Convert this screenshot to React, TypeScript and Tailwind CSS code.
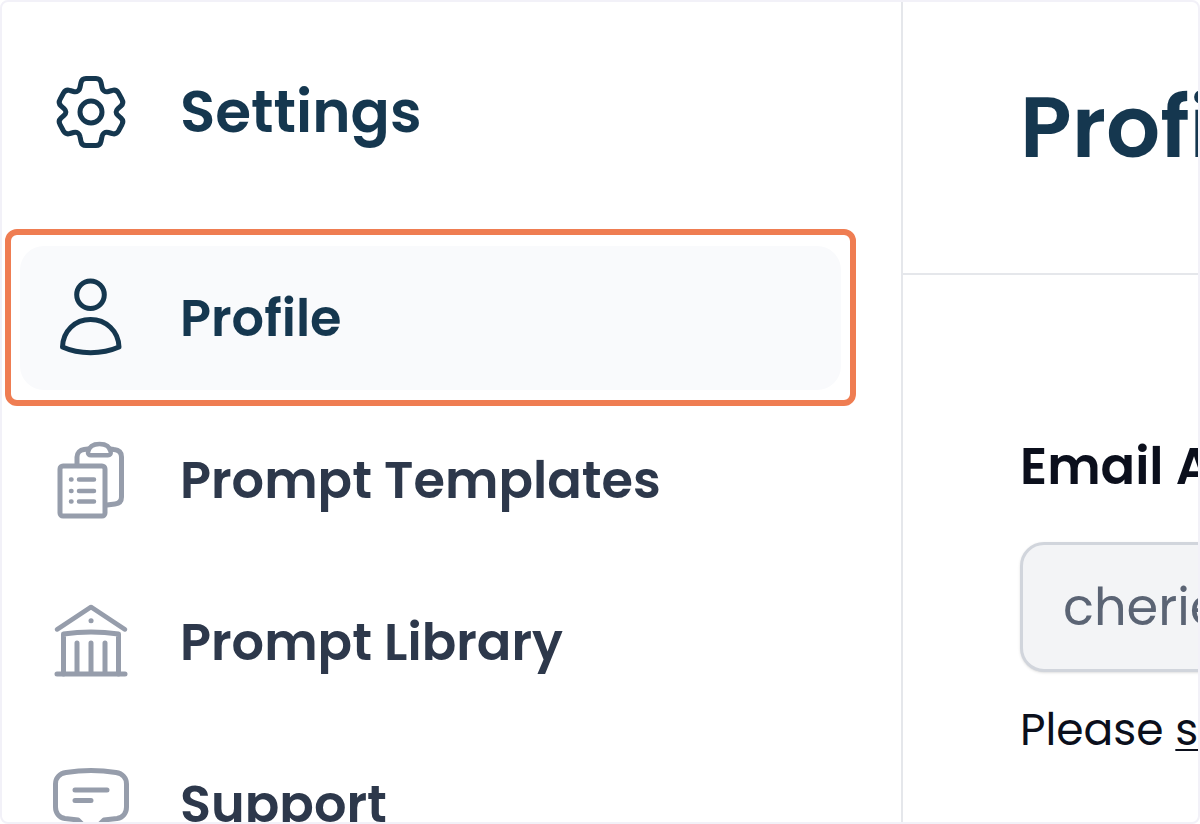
import type { ReactNode } from "react"

function GearIcon() {
  return (
    <svg viewBox="0 0 80 80" className="size-20 shrink-0" fill="none" stroke="currentColor" strokeWidth="5" aria-hidden="true">
      <path d="M35 6.5H45C48 6.5 49.5 8 50 10.5L51 15.5C51.5 18.5 54 20.5 57.5 19.5L61 18.5C64 17.5 66 18.5 67.5 21L71 27.5C72.5 30 72 32 70 34L67 36.5C64.5 39 64.5 41 67 43.5L70 46C72 48 72.5 50 71 52.5L67.5 59C66 61.5 64 62.5 61 61.5L57.5 60.5C54 59.5 51.5 61.5 51 64.5L50 69.5C49.5 72 48 73.5 45 73.5H35C32 73.5 30.5 72 30 69.5L29 64.5C28.5 61.5 26 59.5 22.5 60.5L19 61.5C16 62.5 14 61.5 12.5 59L9 52.5C7.5 50 8 48 10 46L13 43.5C15.5 41 15.5 39 13 36.5L10 34C8 32 7.5 30 9 27.5L12.5 21C14 18.5 16 17.5 19 18.5L22.5 19.5C26 20.5 28.5 18.5 29 15.5L30 10.5C30.5 8 32 6.5 35 6.5Z" />
      <circle cx="40" cy="40" r="11" />
    </svg>
  )
}

function UserIcon() {
  return (
    <svg viewBox="0 0 80 80" className="size-20 shrink-0" fill="none" stroke="currentColor" strokeWidth="5" strokeLinejoin="round" aria-hidden="true">
      <circle cx="39.5" cy="16.7" r="13.8" />
      <path d="M11.5 69C12 53 24 41.5 39.5 41.5S67.5 53 68 69C51 76.5 28 76.5 11.5 69Z" />
    </svg>
  )
}

function ClipboardIcon() {
  return (
    <svg viewBox="0 0 80 80" className="size-20 shrink-0" fill="none" stroke="currentColor" strokeWidth="5" strokeLinecap="round" strokeLinejoin="round" aria-hidden="true">
      <rect x="9" y="26" width="45" height="50" rx="3" />
      <path d="M26 24V17C26 13 29 10 33 9.5L37 9" />
      <path d="M59 9L63 9.5C68 10 70.5 13 70.5 17V57C70.5 61 68 63.5 64 64L56 65" />
      <path d="M40 15.3H57C59 15.3 60 14 59.7 12C59 7 55 4 48.5 4S38 7 37 12C36.7 14 38 15.3 40 15.3Z" strokeWidth="4.5" />
      <path d="M20 39.5H20.5M20 51H20.5M20 61.5H20.5M28 39.5H43M28 51H43M28 61.5H43" strokeWidth="4.5" />
    </svg>
  )
}

function LibraryIcon() {
  return (
    <svg viewBox="0 0 80 80" className="size-20 shrink-0" fill="none" stroke="currentColor" strokeWidth="5" strokeLinecap="round" strokeLinejoin="round" aria-hidden="true">
      <path d="M6 27.5L40 5L74 27.5" strokeWidth="4.5" />
      <path d="M40 18.7H40.1" />
      <path d="M12.5 72V32Q40 28 67.5 32V72" />
      <path d="M26 41V72M40 41V72M54 41V72M6 72H74" />
    </svg>
  )
}

function SupportIcon() {
  return (
    <svg viewBox="0 0 80 80" className="size-20 shrink-0" fill="none" stroke="currentColor" strokeWidth="5" strokeLinecap="round" strokeLinejoin="round" aria-hidden="true">
      <path d="M15 8.5Q40 4.5 65 8.5C71.5 9.5 75.5 14 75.5 20V43C75.5 49 72 53.5 66 54.5L53 56L40 69L27 56L14 54.5C8 53.5 4.5 49 4.5 43V20C4.5 14 8.5 9.5 15 8.5Z" />
      <path d="M24 26H56M24 36.5H40" />
    </svg>
  )
}

const items: { label: string; icon: ReactNode; active?: boolean }[] = [
  { label: "Profile", icon: <UserIcon />, active: true },
  { label: "Prompt Templates", icon: <ClipboardIcon /> },
  { label: "Prompt Library", icon: <LibraryIcon /> },
  { label: "Support", icon: <SupportIcon /> },
]

function Sidebar() {
  return (
    <aside className="w-[901px] shrink-0 border-r-2 border-gray-200">
      <div className="flex h-[220px] items-center gap-[49px] pl-[49px] text-[#15374f]">
        <GearIcon />
        <h2 className="text-[58px] leading-[72px] font-semibold">Settings</h2>
      </div>
      <nav className="mt-6 mr-[60px] ml-[18px]">
        <ul className="flex flex-col gap-[18px]">
          {items.map((item) => (
            <li key={item.label} className="relative">
              <a
                href="#"
                aria-current={item.active ? "page" : undefined}
                className={
                  item.active
                    ? "flex h-36 items-center gap-[49px] rounded-3xl bg-[#f9fafc] pl-[31px] text-[#15374f]"
                    : "flex h-36 items-center gap-[49px] rounded-3xl pl-[31px] text-[#969dab]"
                }
              >
                {item.icon}
                <span
                  className={
                    item.active
                      ? "text-[51px] leading-[64px] font-semibold"
                      : "text-[51px] leading-[64px] font-semibold text-[#2d384b]"
                  }
                >
                  {item.label}
                </span>
              </a>
              {item.active && (
                <span className="pointer-events-none absolute -inset-x-[15px] -top-[17px] -bottom-4 rounded-xl border-6 border-[#ef7d52]" />
              )}
            </li>
          ))}
        </ul>
      </nav>
    </aside>
  )
}

function ProfilePanel() {
  return (
    <main className="min-w-0 flex-1 overflow-hidden whitespace-nowrap">
      <header className="flex h-[273px] items-center border-b-2 border-gray-200 pb-5 pl-[117px]">
        <h1 className="text-[85px] leading-[104px] font-semibold text-[#15374f]">Profile</h1>
      </header>
      <form className="flex w-[1200px] flex-col pt-[159px] pl-[117px] text-[#0b0f1c]">
        <label htmlFor="email" className="text-[51px] leading-[64px] font-semibold">
          Email Address
        </label>
        <input
          id="email"
          type="email"
          readOnly
          defaultValue="cherie"
          className="mt-11 h-[130px] rounded-3xl border-3 border-gray-300 bg-gray-100 px-10 text-[51px] text-[#5b6474] shadow-sm"
        />
        <p className="mt-7 text-[44px] leading-[60px]">
          Please{" "}
          <a href="#" className="underline decoration-2 underline-offset-4">
            submit
          </a>
        </p>
      </form>
    </main>
  )
}

export default function App() {
  return (
    <div className="flex h-screen overflow-hidden rounded-lg border-2 border-[#f2f1f8] bg-white font-['Poppins','Inter',sans-serif]">
      <Sidebar />
      <ProfilePanel />
    </div>
  )
}
